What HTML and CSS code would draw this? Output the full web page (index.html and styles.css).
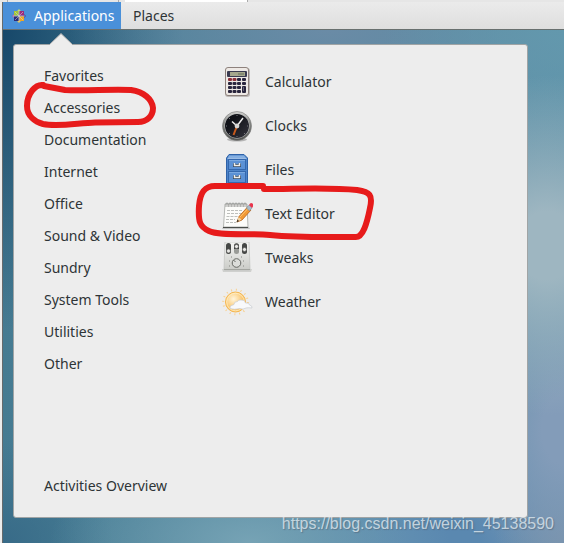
FILE: index.html
```html
<!DOCTYPE html>
<html lang="en">
<head>
<meta charset="utf-8">
<title>Applications</title>
<link rel="stylesheet" href="styles.css">
</head>
<body>
<div class="window">
  <div class="tabs"><span class="tab"></span><span class="tab tab-active"></span></div>
  <div class="screen">
    <header class="topbar">
      <button class="top-item top-active" type="button">
        <svg class="logo" viewBox="0 0 14 14" aria-hidden="true">
          <path fill="#b9d36a" d="M7 0l2.500 2.500h-5z"/>
          <path fill="#b065a3" d="M0 7l2.500-2.500v5z"/>
          <path fill="#4a4793" d="M14 7l-2.500-2.500v5z"/>
          <path fill="#e3c24a" d="M7 14l2.500-2.500h-5z"/>
          <path fill="#a4c639" d="M2 2h4.700v4.700H2z"/>
          <path fill="#9b2a7c" d="M7.300 2H12v4.700H7.300z"/>
          <path fill="#2f2b72" d="M2 7.300h4.700V12H2z"/>
          <path fill="#efa724" d="M7.300 7.300H12V12H7.300z"/>
          <path stroke="#e4d9e2" stroke-width=".5" d="M7 1v12M1 7h12M3 3l8 8M11 3l-8 8"/>
        </svg>
        <span>Applications</span>
      </button>
      <button class="top-item" type="button">Places</button>
    </header>
    <main class="desktop">
      <section class="menu">
        <svg class="pointer" viewBox="0 0 24 12" aria-hidden="true"><path d="M0 12L12 .5 24 12" fill="#ededed" stroke="#a5a8a9"/></svg>
        <nav class="categories">
          <a href="#">Favorites</a>
          <a href="#">Accessories</a>
          <a href="#">Documentation</a>
          <a href="#">Internet</a>
          <a href="#">Office</a>
          <a href="#">Sound &amp; Video</a>
          <a href="#">Sundry</a>
          <a href="#">System Tools</a>
          <a href="#">Utilities</a>
          <a href="#">Other</a>
          <a class="overview" href="#">Activities Overview</a>
        </nav>
        <nav class="apps">
          <a href="#">
            <svg viewBox="0 0 32 32" aria-hidden="true">
              <rect x="4" y="2" width="25" height="29" rx="3" fill="#bdb9b8"/>
              <rect x="4.500" y="1.500" width="23" height="28" rx="2.500" fill="#eee9e5" stroke="#8e827d"/>
              <rect x="6" y="5" width="20" height="6" rx="1" fill="#3a3b50"/>
              <rect x="9" y="6" width="15" height="4" fill="#a5a78c"/>
              <path d="M17 8h2M20 7v2M22 7v2" stroke="#67705b"/>
              <g fill="#29253d"><rect x="16" y="12" width="4" height="3" rx="1"/><rect x="21" y="12" width="4" height="3" rx="1"/>
              <rect x="7" y="16" width="4" height="3" rx="1"/><rect x="11.500" y="16" width="4" height="3" rx="1"/><rect x="16" y="16" width="4" height="3" rx="1"/><rect x="21" y="16" width="4" height="3" rx="1"/>
              <rect x="7" y="20" width="4" height="3" rx="1"/><rect x="11.500" y="20" width="4" height="3" rx="1"/><rect x="16" y="20" width="4" height="3" rx="1"/>
              <rect x="7" y="24" width="4" height="3" rx="1"/><rect x="11.500" y="24" width="4" height="3" rx="1"/><rect x="16" y="24" width="4" height="3" rx="1"/>
              <rect x="21" y="20" width="4" height="7" rx="1"/></g>
              <path d="M22.500 21v4" stroke="#686579"/>
              <rect x="7" y="12" width="4" height="3" rx="1" fill="#8b3039"/><rect x="11.500" y="12" width="4" height="3" rx="1" fill="#8b3039"/>
            </svg>
            <span>Calculator</span></a>
          <a href="#">
            <svg viewBox="0 0 32 32" aria-hidden="true">
              <defs><linearGradient id="rim" x2="0" y2="1"><stop stop-color="#d4d4d2"/><stop offset=".4" stop-color="#858784"/><stop offset="1" stop-color="#50524f"/></linearGradient>
              <linearGradient id="face" x2="1" y2="1"><stop offset=".3" stop-color="#101218"/><stop offset="1" stop-color="#34343d"/></linearGradient></defs>
              <ellipse cx="16" cy="29.500" rx="10" ry="2" fill="#b5b5b5"/>
              <circle cx="16" cy="16" r="14.500" fill="url(#rim)" stroke="#777" stroke-width=".6"/>
              <circle cx="16" cy="16" r="12.500" fill="#c4c5c5"/><circle cx="16" cy="16" r="12" fill="url(#face)"/>
              <path d="M16 5v1M16 26v1M5 16h1M26 16h1M8 8l1 1M24 24l-1-1M8 24l1-1" stroke="#74757a"/>
              <path d="M16 16l-3.500 9" stroke="#c95b1d" stroke-width="2"/>
              <path d="M16 16l-5-4.500M16 16l6-8" stroke="#eeeeed" stroke-width="1.500"/>
              <circle cx="16" cy="16" r="2.400" fill="#d6d6d4"/>
            </svg>
            <span>Clocks</span></a>
          <a href="#">
            <svg viewBox="0 0 32 32" aria-hidden="true">
              <path d="M5.500 4L8 .5h15L26.500 4v28h-21z" fill="#4d84c9" stroke="#2f62a8"/>
              <path d="M8 1.500h15L25 4H7z" fill="#85afe1"/>
              <path d="M6.500 4.500h19" stroke="#9bbce5"/>
              <rect x="7.500" y="5.500" width="17" height="10" fill="#5b91d5" stroke="#3468ae"/>
              <rect x="7.500" y="17.500" width="17" height="11" fill="#5b91d5" stroke="#3468ae"/>
              <path d="M8 6.500h16M8 18.500h16" stroke="#79a8e0"/>
              <g fill="none" stroke="#39495c" stroke-width="3"><path d="M13.500 9.500v2h5v-2M13.500 21.500v2h5v-2"/></g>
              <g fill="none" stroke="#eeeeeb" stroke-width="1.500"><path d="M13.500 9v2.500h5V9M13.500 21v2.500h5V21"/></g>
            </svg>
            <span>Files</span></a>
          <a href="#">
            <svg viewBox="0 0 32 32" aria-hidden="true">
              <path d="M2 29h26l1 2H1z" fill="#c4c4c4"/>
              <path d="M4 6h22l1 23H2.500z" fill="#fcfcfa" stroke="#a5a7a3" stroke-width=".8"/>
              <path d="M2 29.500h25" stroke="#4a4d49"/>
              <path d="M6 12.500h16M6 15.500h15M5.500 18.500h12M5 21.500h9M5 24.500h10" stroke="#bdbfbc" stroke-dasharray="3 1"/>
              <path d="M5 9V6a1 1 0 012 0v3M8 9V6a1 1 0 012 0v3M11 9V6a1 1 0 012 0v3M14 9V6a1 1 0 012 0v3M17 9V6a1 1 0 012 0v3M20 9V6a1 1 0 012 0v3M23 9V6a1 1 0 012 0v3" fill="none" stroke="#8a8c89" stroke-width=".8"/>
              <path d="M16 24l2-5.500 8.500-9.500 3.500 3-9 10z" fill="#f29a35" stroke="#b66018" stroke-width=".8"/>
              <path d="M19 19l8.500-9" stroke="#ffc474"/>
              <path d="M16 24l1.500-5 3 2.500z" fill="#efd4a4"/><path d="M15.500 24.500l1-3 1.500 1.500z" fill="#3b3025"/>
              <path d="M25.500 10L28 7l3 3-2.500 3z" fill="#a7bac9" stroke="#738695" stroke-width=".5"/>
              <path d="M28 7q1.500-3 3.500-1.500T31 10z" fill="#e9344c"/>
            </svg>
            <span>Text Editor</span></a>
          <a href="#">
            <svg viewBox="0 0 32 32" aria-hidden="true">
              <defs><linearGradient id="panel" x2="0" y2="1"><stop stop-color="#f5f5f3"/><stop offset="1" stop-color="#cacbc7"/></linearGradient></defs>
              <path d="M1 27h30l-1 3H2z" fill="#cfd0ce"/>
              <path d="M4 0h24l1 27q0 1-1 1H4q-1 0-1-1z" fill="url(#panel)" stroke="#c0c1be" stroke-width=".7"/>
              <path d="M3 27.500h26" stroke="#a3a5a0"/>
              <rect x="5" y="1" width="5" height="11" rx="2.500" fill="#454745"/><rect x="13" y="1" width="5" height="11" rx="2.500" fill="#999b97"/><rect x="21" y="1" width="5" height="11" rx="2.500" fill="#454745"/>
              <path d="M13 4a2.500 2.500 0 015 0v3h-5z" fill="#3d3f3d"/>
              <g fill="#e8e8e4" stroke="#555" stroke-width=".6"><circle cx="7.500" cy="9" r="2"/><circle cx="15.500" cy="4.500" r="2"/><circle cx="23.500" cy="7.500" r="2"/></g>
              <circle cx="15.500" cy="21" r="4.300" fill="#dcddda" stroke="#666863"/>
              <path d="M12.500 18l2 2" stroke="#666863"/>
              <path d="M8 19h1M22 19h1M10 15h1M20 15h1M8 24h1M22 24h1" stroke="#858782"/>
            </svg>
            <span>Tweaks</span></a>
          <a href="#">
            <svg viewBox="0 0 32 32" aria-hidden="true">
              <defs><radialGradient id="sun" cx=".4" cy=".35"><stop stop-color="#fff5dc"/><stop offset="1" stop-color="#fac366"/></radialGradient></defs>
              <circle cx="14.500" cy="16" r="12.300" fill="none" stroke="#f9d08d" stroke-width="2" stroke-dasharray="1 3.830"/>
              <circle cx="14.500" cy="16" r="10" fill="url(#sun)" stroke="#f5b64f"/>
              <circle cx="14.500" cy="16" r="8.800" fill="none" stroke="#fff0c6" stroke-width=".8"/>
              <path d="M9 22.500q-1-3 4-4 0-3 3.500-3 .5-2 3.500-1.500 4-.5 4.500 3 4-.5 4 2 3 .5 2.500 3-4-.5-6 0-3 2-6 .5-6 1.500-10 0z" fill="#f8f9fb" stroke="#c9cbd0" stroke-width=".7"/>
            </svg>
            <span>Weather</span></a>
        </nav>
      </section>
    </main>
  </div>
  <svg class="marks" viewBox="0 0 564 543" aria-hidden="true">
    <g fill="none" stroke="#e71b1b" stroke-width="6" stroke-linecap="round" stroke-linejoin="round">
      <path d="M43 85C36 84 27 93 27 106C27 116 35 122 43 124C58 127 78 123 95 122.500L138 122C147 122 153 116 153 108C152 99 144 92 131 90C112 89 85 91 65 90L44 86"/>
      <path d="M263 186H215C204 186 200 193 199 206C198 222 200 227 209 231C220 236 246 233 270 235C300 238 335 237 355 237C363 238 367 223 370 208C373 195 370 192 357 190C330 187 296 189 264 189"/>
    </g>
  </svg>
  <div class="watermark">https://blog.csdn.net/weixin_45138590</div>
</div>
</body>
</html>
```
FILE: styles.css
```css
* { box-sizing: border-box; }
body { margin: 0; font-family: "Noto Sans", sans-serif; font-size: 14px; color: #2e3436; }
a { color: inherit; text-decoration: none; }
.window { position: relative; display: flex; flex-direction: column; min-height: 100vh; background: #ececec; overflow: hidden; }
.tabs { display: flex; gap: 6px; height: 2px; padding-left: 7px; background: #e6e6e6; }
.tab { width: 112px; border: solid #aaa; border-width: 0 1px; }
.tab-active { width: 123px; background: #fff; border-left: 0; }
.screen { flex: 1; display: flex; flex-direction: column; margin-left: 2px; border-left: 1px solid #666b6d; }
.topbar { display: flex; height: 28px; background: linear-gradient(#ebebeb, #dedede); border-bottom: 1px solid #68706f; }
.top-item { display: flex; align-items: center; gap: 8px; padding: 0 12px; border: 0; background: none; color: inherit; font: inherit; line-height: 26px; }
.top-active { width: 118px; padding: 0 9px; background: #4a90d9; color: #fff; }
.logo { width: 14px; height: 14px; flex: none; }
.desktop {
  flex: 1; display: flex; padding: 14px 36px 25px 10px;
  background:
    radial-gradient(ellipse 150px 170px at 97% 42%, #9eb6c1 20%, #9eb6c100),
    radial-gradient(ellipse 110px 170px at 100% 78%, #839cb9 20%, #839cb900),
    radial-gradient(ellipse 70px 100px at 100% 100%, #738fa8 10%, #738fa800),
    radial-gradient(ellipse 200px 100px at 44% 100%, #76a3b5, #76a3b500),
    radial-gradient(ellipse 220px 160px at 80% 100%, #5a88b0 20%, #5a88b000),
    radial-gradient(ellipse 180px 150px at 100% 0, #6398ad, #6398ad00),
    radial-gradient(ellipse 260px 90px at 58% 0, #6a8ba6, #6a8ba600),
    radial-gradient(ellipse 180px 300px at 0 0, #17486a, #17486a00),
    radial-gradient(ellipse 110px 100px at 0 100%, #386b88, #386b8800),
    linear-gradient(90deg, #457b92, #5f91a8);
}
.menu { position: relative; flex: 1; display: grid; grid-template-columns: 178px 1fr; padding: 15px 29px; background: #ededed; border: 1px solid #a0a4a5; border-radius: 3px; }
.pointer { position: absolute; left: 35px; top: -12px; width: 24px; height: 12px; }
.categories { display: flex; flex-direction: column; padding-left: 1px; line-height: 32px; }
.overview { margin-top: auto; }
.apps { line-height: 44px; }
.apps a { display: flex; align-items: center; gap: 12px; height: 44px; }
.apps svg { width: 32px; height: 32px; flex: none; }
.marks { position: absolute; left: 0; top: 0; width: 564px; height: 543px; pointer-events: none; }
.watermark { position: absolute; right: 10px; bottom: 9px; font: 16px/20px "Liberation Sans", sans-serif; color: #dfe8eecc; text-shadow: 1px 1px 1px #50607088; }
```
